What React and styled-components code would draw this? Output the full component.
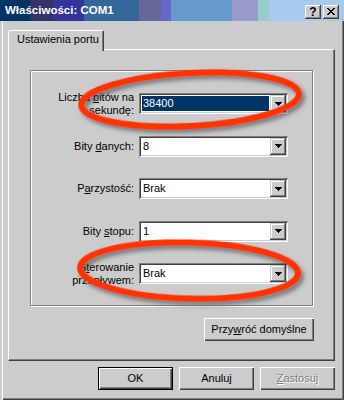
import React from "react";
import styled, { createGlobalStyle } from "styled-components";

const FACE = "#cccccc";
const LIGHT = "#ffffff";
const SHADOW = "#808080";
const DARK = "#404040";
const NAVY = "#003366";

const GlobalStyle = createGlobalStyle`
  html, body { margin: 0; padding: 0; background: ${FACE}; }
  body {
    font-family: "Liberation Sans", Arial, sans-serif;
    font-size: 11px;
    color: #000;
  }
  * { box-sizing: border-box; }
`;

const Window = styled.div`
  position: relative;
  width: 344px;
  height: 400px;
  background: ${FACE};
  display: flex;
  flex-direction: column;
  overflow: hidden;
`;

const TitleBar = styled.div`
  flex: none;
  height: 21px;
  display: flex;
  align-items: flex-start;
  justify-content: space-between;
  padding: 0 5px 0 5px;
  background: linear-gradient(
    to right,
    #003366 0 30px,
    #333366 30px 53px,
    #333399 53px 84px,
    #336699 84px 139px,
    #666699 139px 161px,
    #6666cc 161px 171px,
    #6699cc 171px 232px,
    #9999cc 232px 258px,
    #99cccc 258px 269px,
    #a6caf0 269px
  );
`;

const Title = styled.div`
  margin-top: 4px;
  line-height: 13px;
  font-size: 11.5px;
  font-weight: bold;
  color: #fff;
  white-space: nowrap;
`;

const CaptionButtons = styled.div`
  display: flex;
  gap: 2px;
  margin-top: 5px;
`;

const CaptionButton = styled.div`
  width: 16px;
  height: 14px;
  display: flex;
  align-items: center;
  justify-content: center;
  background: ${FACE};
  box-shadow: inset -1px -1px 0 ${DARK}, inset 1px 1px 0 ${LIGHT},
    inset -2px -2px 0 ${SHADOW};
  font-weight: bold;
  font-size: 12px;
  line-height: 12px;
  color: #000;
  padding-bottom: 1px;
`;

const Frame = styled.div`
  flex: 1;
  display: flex;
  flex-direction: column;
  padding: 9px 9px 0 8px;
  box-shadow: inset 2px 0 0 ${FACE}, inset 3px 0 0 ${LIGHT},
    inset -1px 0 0 ${DARK}, inset -2px 0 0 ${SHADOW},
    inset 0 -1px 0 ${DARK}, inset 0 -2px 0 ${SHADOW};
`;

const TabStrip = styled.div`
  display: flex;
  height: 19px;
  position: relative;
  z-index: 1;
`;

const Tab = styled.div`
  width: 96px;
  height: 21px;
  padding: 2px 0 0 8px;
  background: ${FACE};
  border-top: 1px solid ${LIGHT};
  border-left: 1px solid ${LIGHT};
  border-right: 1px solid ${DARK};
  border-radius: 2px 2px 0 0;
  box-shadow: inset -1px 0 0 ${SHADOW};
  line-height: 13px;
  white-space: nowrap;
`;

const TabPanel = styled.div`
  height: 312px;
  border-style: solid;
  border-width: 1px;
  border-color: ${LIGHT} ${DARK} ${DARK} ${LIGHT};
  box-shadow: inset -1px -1px 0 ${SHADOW};
  padding: 20px 0 0 21px;
  display: flex;
  flex-direction: column;
`;

const GroupBox = styled.div`
  width: 283px;
  height: 236px;
  border: 1px solid ${SHADOW};
  box-shadow: inset 1px 1px 0 ${LIGHT}, 1px 1px 0 ${LIGHT};
  padding-top: 22px;
  display: flex;
  flex-direction: column;
  gap: 21.5px;
`;

const Row = styled.div`
  height: 21px;
  display: flex;
  align-items: center;
  gap: 5px;
`;

const Label = styled.div`
  width: 103px;
  text-align: right;
  line-height: 13px;
  white-space: nowrap;
`;

const Key = styled.span`
  text-decoration: underline;
  text-underline-offset: 1px;
`;

const Combo = styled.div`
  width: 149px;
  height: 21px;
  padding: 2px;
  display: flex;
  background: #fff;
  box-shadow: inset 1px 1px 0 ${SHADOW}, inset -1px -1px 0 ${LIGHT},
    inset 2px 2px 0 ${DARK}, inset -2px -2px 0 ${FACE};
`;

const ComboValue = styled.div`
  flex: 1;
  margin: 1px;
  padding-left: 1px;
  line-height: 15px;
  background: ${(p) => (p.$selected ? NAVY : "transparent")};
  color: ${(p) => (p.$selected ? "#fff" : "#000")};
`;

const DropButton = styled.div`
  width: 16px;
  height: 17px;
  display: flex;
  align-items: center;
  justify-content: center;
  background: ${FACE};
  box-shadow: inset -1px -1px 0 ${DARK}, inset 1px 1px 0 ${FACE},
    inset -2px -2px 0 ${SHADOW}, inset 2px 2px 0 ${LIGHT};
`;

const PanelActions = styled.div`
  width: 284px;
  margin-top: 12px;
  display: flex;
  justify-content: flex-end;
`;

const Button = styled.button`
  width: ${(p) => p.$w || 75}px;
  height: 23px;
  padding: 0 0 1px 0;
  margin: 0;
  font: inherit;
  background: ${FACE};
  color: ${(p) => (p.disabled ? SHADOW : "#000")};
  text-shadow: ${(p) => (p.disabled ? `1px 1px 0 ${LIGHT}` : "none")};
  border: ${(p) => (p.$default ? "1px solid #000" : "none")};
  box-shadow: inset 1px 1px 0 ${LIGHT}, inset -1px -1px 0 ${DARK},
    inset -2px -2px 0 ${SHADOW};
  white-space: nowrap;
  cursor: default;
`;

const DialogButtons = styled.div`
  margin-top: 6px;
  display: flex;
  justify-content: flex-end;
  gap: 6px;
`;

const Overlay = styled.svg`
  position: absolute;
  left: 0;
  top: 0;
  pointer-events: none;
`;

const Arrow = () => (
  <svg width="7" height="4" viewBox="0 0 7 4" shapeRendering="crispEdges">
    <path d="M0 0h7v1H0z M1 1h5v1H1z M2 2h3v1H2z M3 3h1v1H3z" fill="#000" />
  </svg>
);

const CloseGlyph = () => (
  <svg width="8" height="7" viewBox="0 0 8 7" shapeRendering="crispEdges">
    <path
      d="M0 0h2v1H0z M6 0h2v1H6z M1 1h2v1H1z M5 1h2v1H5z M2 2h4v1H2z M3 3h2v1H3z M2 4h4v1H2z M1 5h2v1H1z M5 5h2v1H5z M0 6h2v1H0z M6 6h2v1H6z"
      fill="#000"
    />
  </svg>
);

const rows = [
  {
    label: (
      <>
        Liczba <Key>b</Key>itów na
        <br />
        sekundę:
      </>
    ),
    value: "38400",
    selected: true,
  },
  { label: (<>Bity <Key>d</Key>anych:</>), value: "8" },
  { label: (<>P<Key>a</Key>rzystość:</>), value: "Brak" },
  { label: (<>Bity <Key>s</Key>topu:</>), value: "1" },
  {
    label: (
      <>
        S<Key>t</Key>erowanie
        <br />
        przepływem:
      </>
    ),
    value: "Brak",
  },
];

export default function App() {
  return (
    <>
      <GlobalStyle />
      <Window>
        <TitleBar>
          <Title>Właściwości: COM1</Title>
          <CaptionButtons>
            <CaptionButton>?</CaptionButton>
            <CaptionButton>
              <CloseGlyph />
            </CaptionButton>
          </CaptionButtons>
        </TitleBar>
        <Frame>
          <TabStrip>
            <Tab>Ustawienia portu</Tab>
          </TabStrip>
          <TabPanel>
            <GroupBox>
              {rows.map((r, i) => (
                <Row key={i}>
                  <Label>{r.label}</Label>
                  <Combo>
                    <ComboValue $selected={r.selected}>{r.value}</ComboValue>
                    <DropButton>
                      <Arrow />
                    </DropButton>
                  </Combo>
                </Row>
              ))}
            </GroupBox>
            <PanelActions>
              <Button $w={110}>
                Przy<Key>w</Key>róć domyślne
              </Button>
            </PanelActions>
          </TabPanel>
          <DialogButtons>
            <Button $default>OK</Button>
            <Button>Anuluj</Button>
            <Button disabled>
              <Key>Z</Key>astosuj
            </Button>
          </DialogButtons>
        </Frame>
        <Overlay width="344" height="400" viewBox="0 0 344 400">
          <defs>
            <filter id="markShadow" x="-10%" y="-40%" width="125%" height="190%">
              <feDropShadow dx="3" dy="3.5" stdDeviation="2" floodColor="#3a3a3a" floodOpacity="0.6" />
            </filter>
          </defs>
          <ellipse
            cx="190"
            cy="99.5"
            rx="109"
            ry="26.5"
            transform="rotate(-3 190 99.5)"
            fill="none"
            stroke="#ff3300"
            strokeWidth="6"
            filter="url(#markShadow)"
          />
          <ellipse
            cx="189"
            cy="270.5"
            rx="109"
            ry="28"
            transform="rotate(1.5 189 270.5)"
            fill="none"
            stroke="#ff3300"
            strokeWidth="6"
            filter="url(#markShadow)"
          />
        </Overlay>
      </Window>
    </>
  );
}
